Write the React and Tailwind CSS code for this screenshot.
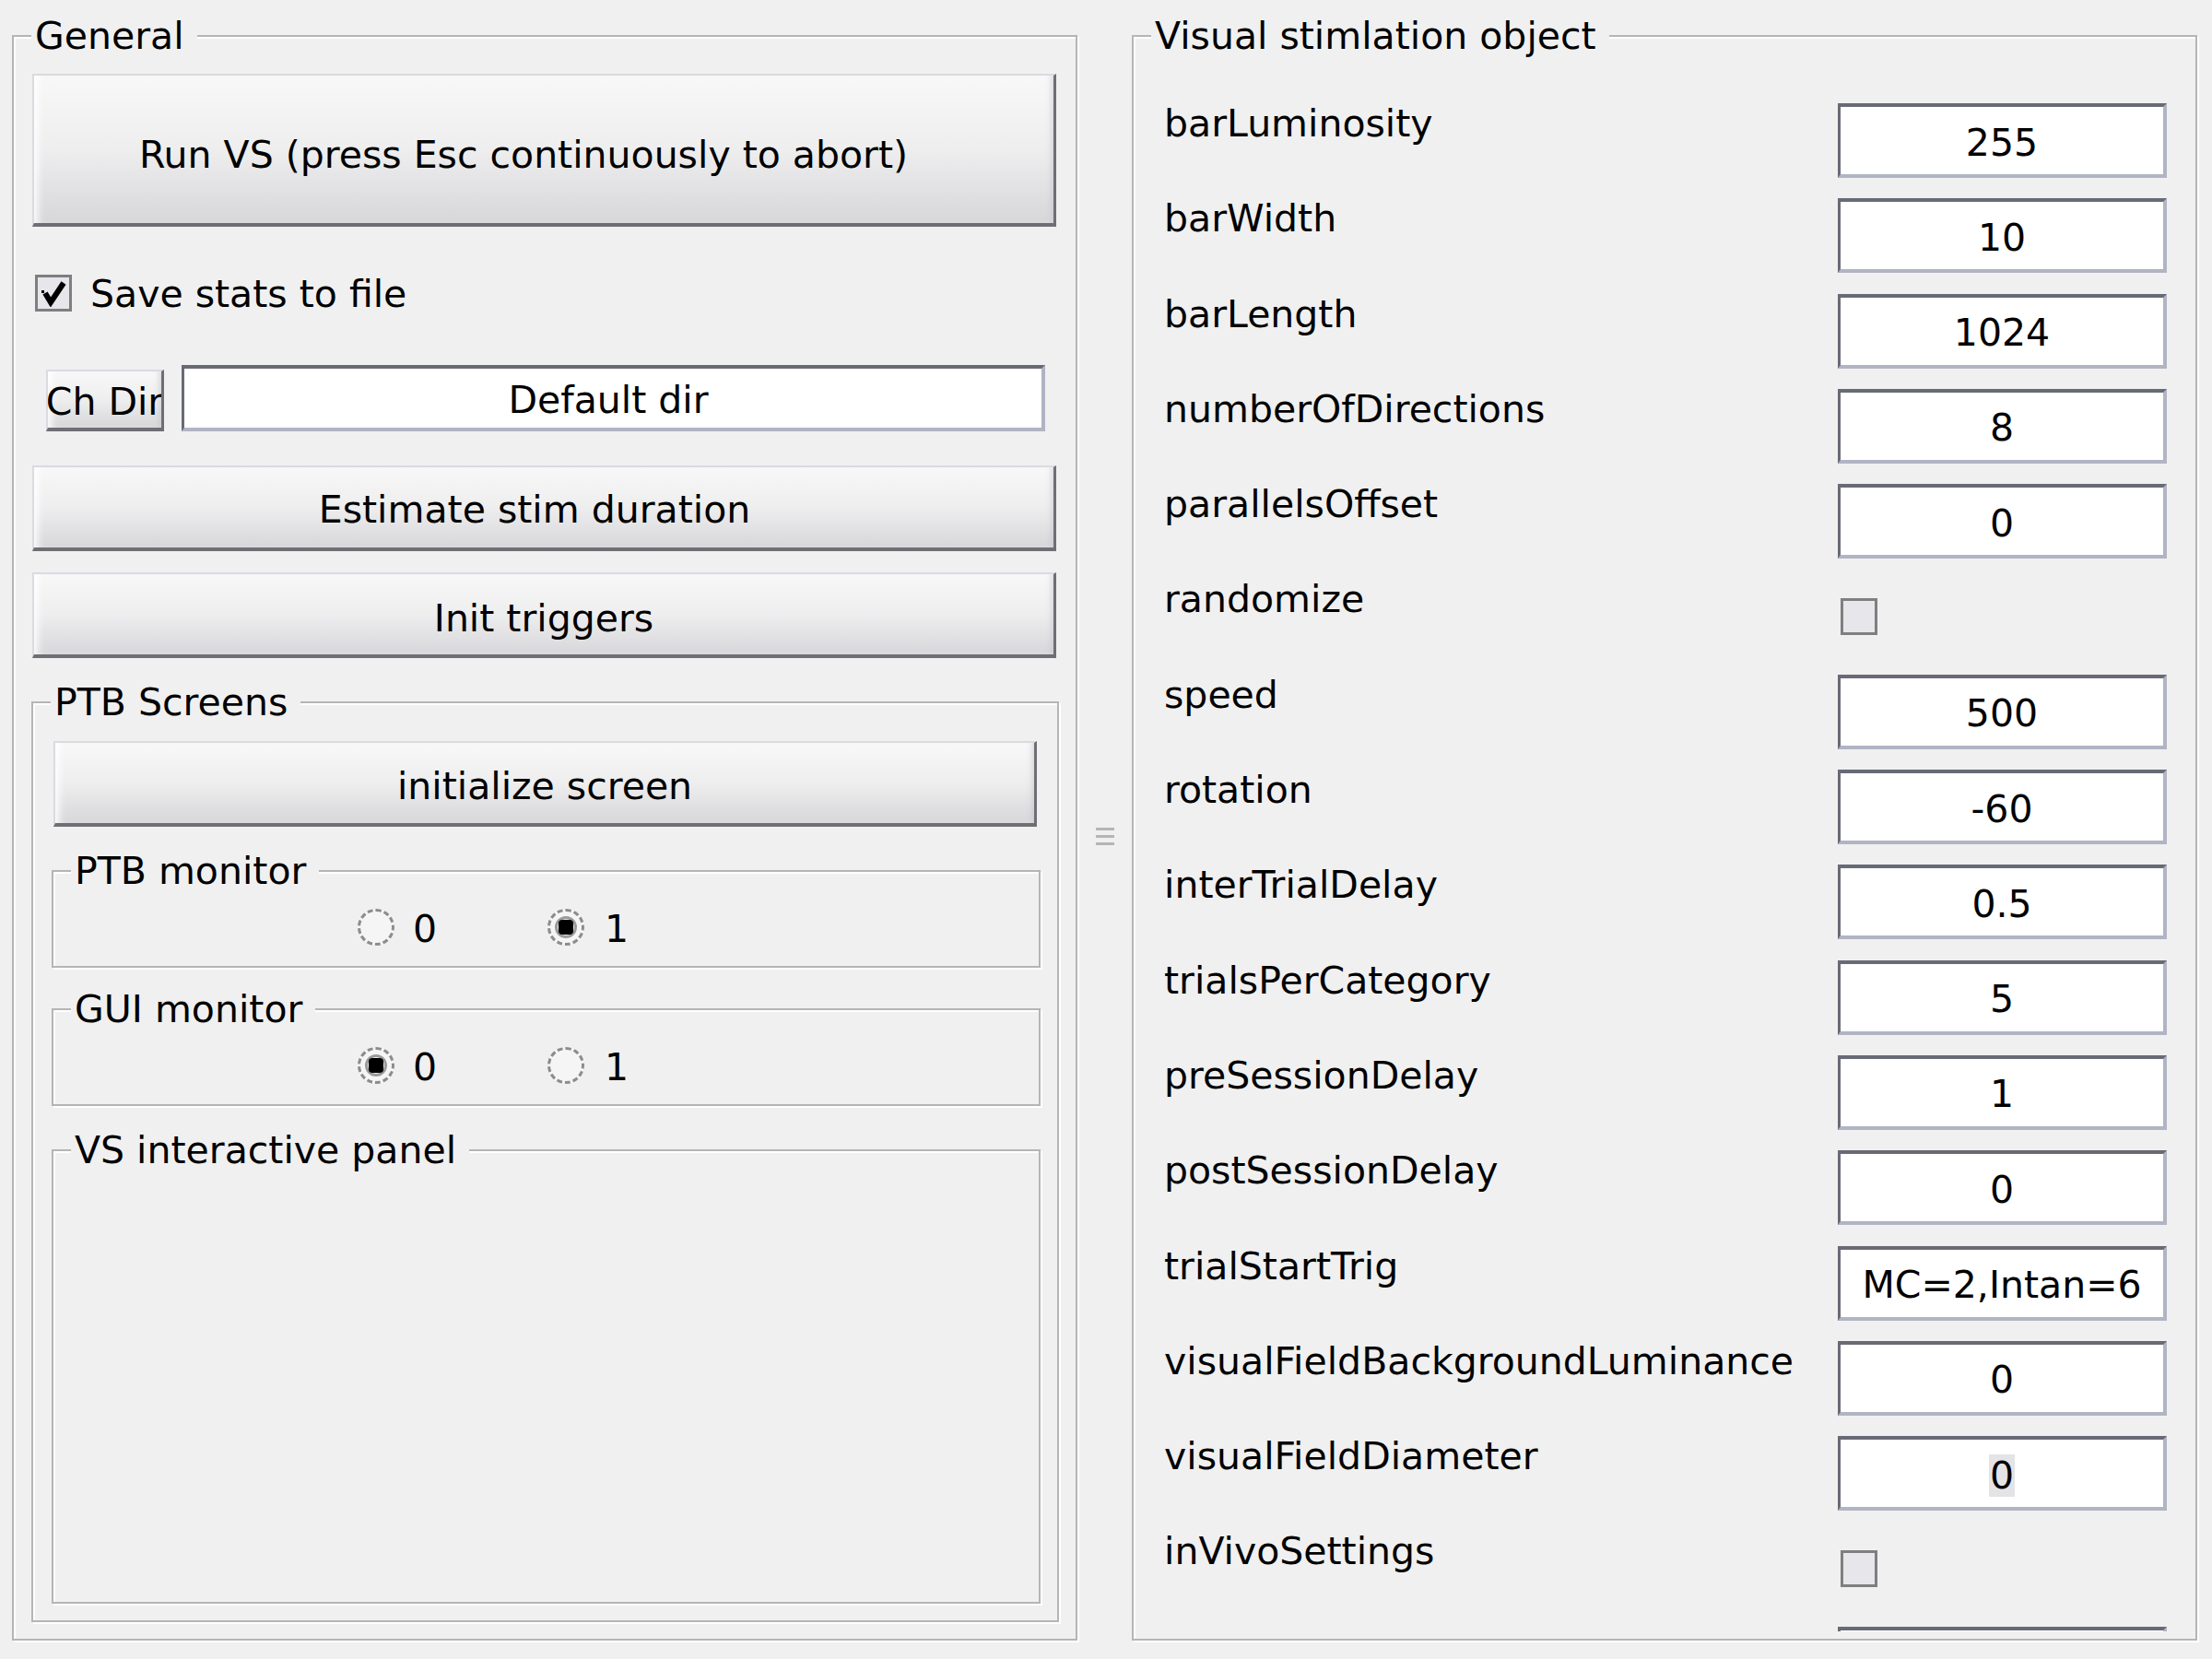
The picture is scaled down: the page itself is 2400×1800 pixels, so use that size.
import React from "react";

function GroupBox({ title, className = "", children }) {
  return (
    <div
      className={
        "relative border-2 border-[#b5b5b5] shadow-[inset_2px_2px_0_#ffffff,2px_2px_0_#ffffff] flex flex-col " +
        className
      }
    >
      <span className="absolute left-[19px] top-[-24px] pl-[4px] pr-[14px] bg-[#f0f0f0] leading-[46px] whitespace-nowrap">
        {title}
      </span>
      {children}
    </div>
  );
}

function Button({ children, className = "" }) {
  return (
    <div
      className={
        "flex items-center justify-center whitespace-nowrap overflow-hidden border-t-2 border-l-2 border-t-[#d9dbe0] border-l-[#d9dbe0] border-r-[3px] border-b-[4px] border-r-[#6e6e75] border-b-[#6e6e75] bg-linear-to-b from-[#f8f8f9] via-[#eeeeef] to-[#d7d7da] shadow-[inset_8px_0_8px_-4px_rgba(255,255,255,0.95),inset_-6px_0_6px_-4px_rgba(190,190,195,0.6)] " +
        className
      }
    >
      {children}
    </div>
  );
}

function Field({ children, className = "" }) {
  return (
    <div
      className={
        "flex items-center justify-center whitespace-nowrap overflow-hidden bg-white pt-[4px] border-t-[4px] border-l-[3px] border-r-[4px] border-b-[4px] border-t-[#686a76] border-l-[#686a76] border-r-[#b1b4c3] border-b-[#b1b4c3] " +
        className
      }
    >
      {children}
    </div>
  );
}

function CheckBox({ checked }) {
  return (
    <div className="w-[40px] h-[40px] shrink-0 border-[3px] border-[#7f7f7f] bg-[#e6e6eb] flex items-center justify-center">
      {checked && (
        <svg width="30" height="30" viewBox="0 0 30 30">
          <rect x="2" y="12" width="3" height="3" fill="#000" />
          <path d="M6 15 L12 25 L26 4" fill="none" stroke="#000" strokeWidth="6" strokeLinejoin="miter" />
        </svg>
      )}
    </div>
  );
}

function Radio({ selected }) {
  return (
    <div className="w-[40px] h-[40px] shrink-0 rounded-full border-[3px] border-dashed border-[#8c8c8c] bg-[#f5f5f5] flex items-center justify-center">
      {selected && (
        <div className="w-[24px] h-[24px] rounded-full border-[3px] border-[#9a9a9a] flex items-center justify-center">
          <div className="w-[16px] h-[16px] rounded-[4px] bg-black" />
        </div>
      )}
    </div>
  );
}

function RadioRow({ value }) {
  return (
    <div className="flex items-center h-[46px] pl-[330px] mt-[37px]">
      <Radio selected={value === 0} />
      <span className="ml-[20px] pt-[3px]">0</span>
      <div className="ml-[120px]">
        <Radio selected={value === 1} />
      </div>
      <span className="ml-[22px] pt-[3px]">1</span>
    </div>
  );
}

const rows = [
  ["barLuminosity", "255"],
  ["barWidth", "10"],
  ["barLength", "1024"],
  ["numberOfDirections", "8"],
  ["parallelsOffset", "0"],
  ["randomize", null],
  ["speed", "500"],
  ["rotation", "-60"],
  ["interTrialDelay", "0.5"],
  ["trialsPerCategory", "5"],
  ["preSessionDelay", "1"],
  ["postSessionDelay", "0"],
  ["trialStartTrig", "MC=2,Intan=6"],
  ["visualFieldBackgroundLuminance", "0"],
  ["visualFieldDiameter", "sel0"],
  ["inVivoSettings", null],
  ["", ""],
];

export default function App() {
  return (
    <div className="w-[2400px] h-[1800px] bg-[#f0f0f0] flex text-black text-[41px] leading-[46px] font-['DejaVu_Sans',sans-serif] overflow-hidden">
      {/* Left: General */}
      <GroupBox title="General" className="ml-[13px] mt-[38px] w-[1156px] h-[1742px] shrink-0">
        <Button className="mt-[40px] ml-[20px] w-[1111px] h-[166px] pt-[12px] pr-[44px]">
          Run VS (press Esc continuously to abort)
        </Button>

        <div className="flex items-center h-[46px] mt-[49px] ml-[23px]">
          <CheckBox checked />
          <span className="ml-[20px] pt-[2px]">Save stats to file</span>
        </div>

        <div className="flex items-end h-[72px] mt-[55px] ml-[35px]">
          <Button className="w-[128px] h-[67px] pt-[4px]">Ch Dir</Button>
          <Field className="ml-[19px] w-[937px] h-[72px] pr-[10px]">Default dir</Field>
        </div>

        <Button className="mt-[37px] ml-[20px] w-[1111px] h-[93px] pt-[5px] pr-[20px]">Estimate stim duration</Button>
        <Button className="mt-[23px] ml-[20px] w-[1111px] h-[93px] pt-[8px]">Init triggers</Button>

        <GroupBox title="PTB Screens" className="mt-[47px] ml-[19px] w-[1115px] h-[999px]">
          <Button className="mt-[41px] ml-[22px] w-[1067px] h-[93px] pt-[6px]">initialize screen</Button>

          <GroupBox title="PTB monitor" className="mt-[47px] ml-[20px] w-[1073px] h-[106px]">
            <RadioRow value={1} />
          </GroupBox>

          <GroupBox title="GUI monitor" className="mt-[44px] ml-[20px] w-[1073px] h-[106px]">
            <RadioRow value={0} />
          </GroupBox>

          <GroupBox title="VS interactive panel" className="mt-[47px] ml-[20px] w-[1073px] h-[493px]" />
        </GroupBox>
      </GroupBox>

      {/* Splitter */}
      <div className="w-[59px] shrink-0 flex flex-col items-center justify-center pt-[14px] gap-[5px]">
        <div className="w-[20px] h-[3px] bg-[#b5b5b5]" />
        <div className="w-[20px] h-[3px] bg-[#b5b5b5]" />
        <div className="w-[20px] h-[3px] bg-[#b5b5b5]" />
      </div>

      {/* Right: Visual stimlation object */}
      <GroupBox title="Visual stimlation object" className="mt-[38px] w-[1156px] h-[1742px] shrink-0">
        <div className="h-[1730px] overflow-hidden pt-[71px] pl-[33px] pr-[31px] flex flex-col">
          {rows.map(([label, value], i) => (
            <div key={i} className="h-[103.3px] shrink-0 flex justify-between items-start">
              <span className="whitespace-nowrap">{label}</span>
              {value === null ? (
                <div className="mt-[1px] w-[357px] h-[81px] flex items-center pl-[3px]">
                  <CheckBox />
                </div>
              ) : (
                <Field className="mt-[1px] w-[357px] h-[81px] shrink-0">
                  {value === "sel0" ? <span className="bg-[#e4e4e6] px-[1px]">0</span> : value}
                </Field>
              )}
            </div>
          ))}
        </div>
      </GroupBox>
    </div>
  );
}
